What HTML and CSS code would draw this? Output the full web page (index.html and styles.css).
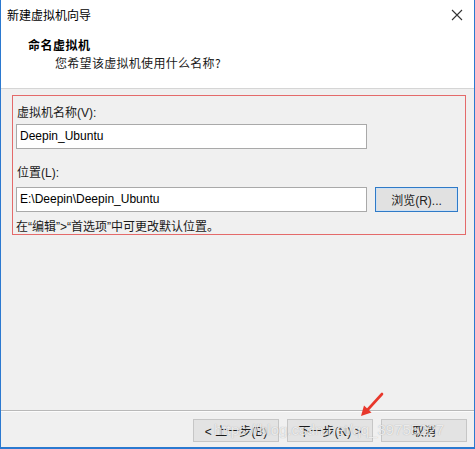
FILE: index.html
```html
<!DOCTYPE html>
<html lang="zh-CN">
<head>
<meta charset="utf-8">
<title>新建虚拟机向导</title>
<link rel="stylesheet" href="styles.css">
</head>
<body>
<div class="window">
  <div class="titlebar">
    <span class="title">新建虚拟机向导</span>
    <svg class="close" width="12" height="12" viewBox="0 0 12 12"><path d="M1 1 L11 11 M11 1 L1 11" stroke="#333" stroke-width="1.1" fill="none"/></svg>
  </div>
  <div class="header">
    <div class="heading">命名虚拟机</div>
    <div class="subtitle">您希望该虚拟机使用什么名称?</div>
  </div>
  <div class="main">
    <div class="redbox">
      <div class="label">虚拟机名称(V):</div>
      <div class="row">
        <div class="input">Deepin_Ubuntu</div>
      </div>
      <div class="label label2">位置(L):</div>
      <div class="row row2">
        <div class="input">E:\Deepin\Deepin_Ubuntu</div>
        <div class="browse">浏览(R)...</div>
      </div>
      <div class="hint">在“编辑”&gt;“首选项”中可更改默认位置。</div>
    </div>
  </div>
  <div class="footer">
    <div class="btn">&lt; 上一步(B)</div>
    <div class="btn">下一步(N) &gt;</div>
    <div class="btn">取消</div>
  </div>
  <svg class="arrow" width="30" height="30" viewBox="0 0 30 30">
    <path d="M26 2 L10.5 19" stroke="#e8382c" stroke-width="2.6" stroke-linecap="round" fill="none"/>
    <path d="M5 24 L8 13.5 L15.5 20.5 Z" fill="#e8382c"/>
  </svg>
  <div class="watermark">https://blog.csdn.net/qq_39755227</div>
</div>
</body>
</html>
```
FILE: styles.css
```css
html, body {
  margin: 0;
  padding: 0;
  background: #ffffff;
}
.window {
  position: relative;
  box-sizing: border-box;
  width: 475px;
  height: 449px;
  border-left: 1px solid #2b79d0;
  border-right: 1px solid #2b79d0;
  border-bottom: 2px solid #2b79d0;
  background: #f0f0f0;
  display: flex;
  flex-direction: column;
  font-family: "Liberation Sans", "Noto Sans CJK SC", sans-serif;
  font-size: 12px;
  color: #000;
}
.titlebar {
  height: 30px;
  background: #fff;
  display: flex;
  align-items: center;
  justify-content: space-between;
  padding: 0 11px 0 6px;
}
.title {
  font-family: "Noto Sans CJK SC", sans-serif;
  font-size: 12px;
  line-height: 16px;
}
.close {
  display: block;
}
.header {
  height: 59px;
  box-sizing: border-box;
  background: #fff;
  padding: 7px 0 0 27px;
  border-bottom: 1px solid #d5d5d5;
}
.heading {
  font-family: "Noto Sans CJK SC", sans-serif;
  font-weight: bold;
  font-size: 12px;
  line-height: 16px;
  letter-spacing: 0.5px;
}
.subtitle {
  font-family: "Noto Sans CJK SC", sans-serif;
  font-size: 12px;
  line-height: 16px;
  margin: 2px 0 0 27px;
  color: #1a1a1a;
  letter-spacing: 0.3px;
}
.main {
  flex: 1;
  padding: 6px 0 0 11px;
}
.redbox {
  box-sizing: border-box;
  width: 454px;
  height: 140px;
  border: 1px solid #e46a6a;
  padding: 9px 0 0 3px;
}
.label {
  line-height: 16px;
  padding-left: 1px;
  color: #1a1a1a;
}
.label2 {
  margin-top: 16px;
}
.row {
  display: flex;
  margin-top: 3px;
  gap: 8px;
}
.row2 {
  margin-top: 6px;
}
.input {
  box-sizing: border-box;
  width: 351px;
  height: 25px;
  border: 1px solid #a9a9a9;
  background: #fff;
  padding: 0 3px;
  line-height: 23px;
  font-size: 12px;
}
.browse {
  box-sizing: border-box;
  width: 83px;
  height: 25px;
  border: 1px solid #2f7ac7;
  box-shadow: inset 0 0 0 1px #cfe1f3;
  background: #e1e1e1;
  display: flex;
  align-items: center;
  justify-content: center;
  color: #222;
}
.hint {
  margin-top: 8px;
  line-height: 14px;
  color: #1a1a1a;
}
.footer {
  height: 37px;
  box-sizing: border-box;
  border-top: 1px solid #b9b9b9;
  box-shadow: inset 0 1px 0 #fcfcfc;
  padding: 8px 7px 0 0;
  display: flex;
  justify-content: flex-end;
  gap: 8px;
}
.btn {
  box-sizing: border-box;
  width: 86px;
  height: 23px;
  border: 1px solid #c6c6c6;
  background: #e3e3e3;
  display: flex;
  align-items: center;
  justify-content: center;
  color: #1a1a1a;
}
.arrow {
  position: absolute;
  left: 355px;
  top: 392px;
}
.watermark {
  position: absolute;
  left: 213px;
  top: 421px;
  font-family: "Liberation Sans", sans-serif;
  font-size: 15px;
  line-height: 18px;
  color: rgba(255, 255, 255, 0.75);
  text-shadow: 0 0 1px rgba(120, 120, 120, 0.6);
  white-space: nowrap;
}
```
